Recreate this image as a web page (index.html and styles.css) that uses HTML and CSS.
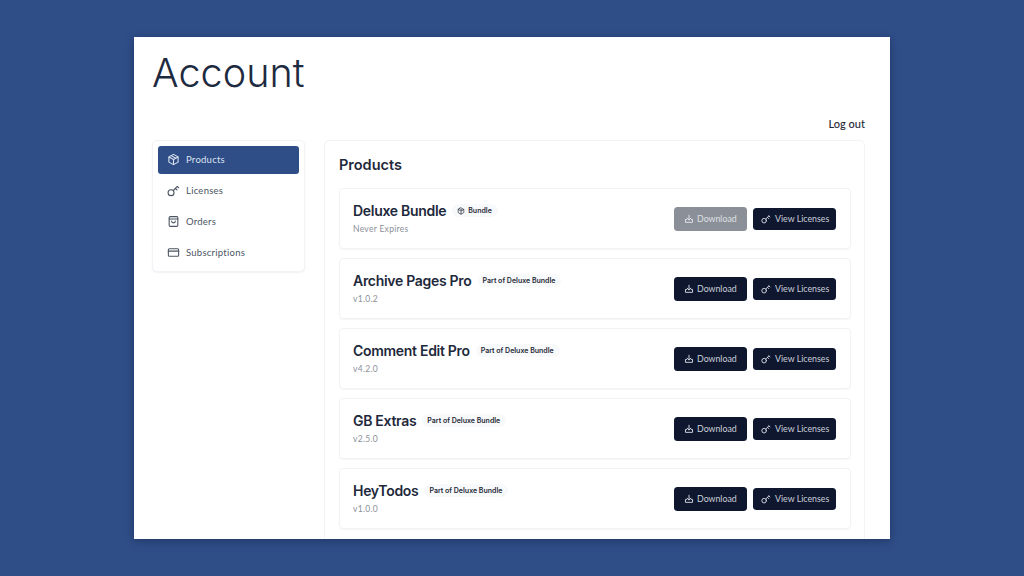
FILE: index.html
```html
<!DOCTYPE html>
<html lang="en">
<head>
<meta charset="utf-8">
<title>Account</title>
<link rel="stylesheet" href="styles.css">
</head>
<body>
<svg class="defs" width="0" height="0" aria-hidden="true">
  <defs>
    <symbol id="i-box" viewBox="0 0 24 24"><path d="M12 2.500l8.500 4.700v9.600L12 21.500l-8.500-4.700V7.200z"/><path d="M3.800 7.300L12 12l8.200-4.700M12 12v9.300M7.800 4.900l8.400 4.800"/></symbol>
    <symbol id="i-key" viewBox="0 0 24 24"><circle cx="7.500" cy="16" r="5.500"/><path d="M11.500 12L19 4.500M15.500 8l3 3M19 4.500l2.500 2.500"/></symbol>
    <symbol id="i-bag" viewBox="0 0 24 24"><rect x="4" y="3" width="16" height="18" rx="2"/><path d="M4 7.500h16M8.500 11c0 2 1.500 3.500 3.500 3.500s3.500-1.500 3.500-3.500"/></symbol>
    <symbol id="i-card" viewBox="0 0 24 24"><rect x="2.500" y="5" width="19" height="14" rx="2"/><path d="M2.500 9.500h19"/></symbol>
    <symbol id="i-dl" viewBox="0 0 24 24"><path d="M12 3v11M7.500 10l4.500 4.500 4.500-4.500M6.500 13H3.500v7h17v-7h-3"/></symbol>
  </defs>
</svg>
<div class="window">
  <h1 class="title">Account</h1>
  <div class="logout-row"><a class="logout">Log out</a></div>
  <div class="columns">
    <nav class="nav">
      <a class="nav-item active"><svg class="nav-icon"><use href="#i-box"/></svg>Products</a>
      <a class="nav-item"><svg class="nav-icon"><use href="#i-key"/></svg>Licenses</a>
      <a class="nav-item"><svg class="nav-icon"><use href="#i-bag"/></svg>Orders</a>
      <a class="nav-item"><svg class="nav-icon"><use href="#i-card"/></svg>Subscriptions</a>
    </nav>
    <main class="panel">
      <h2 class="panel-title">Products</h2>
      <div class="row">
        <div class="info">
          <div class="name-line"><span class="name">Deluxe Bundle</span><span class="badge"><svg class="badge-icon"><use href="#i-box"/></svg>Bundle</span></div>
          <div class="meta">Never Expires</div>
        </div>
        <a class="btn btn-dl disabled"><svg class="btn-icon"><use href="#i-dl"/></svg>Download</a>
        <a class="btn btn-lic"><svg class="btn-icon"><use href="#i-key"/></svg>View Licenses</a>
      </div>
      <div class="row">
        <div class="info">
          <div class="name-line"><span class="name">Archive Pages Pro</span><span class="badge">Part of Deluxe Bundle</span></div>
          <div class="meta">v1.0.2</div>
        </div>
        <a class="btn btn-dl"><svg class="btn-icon"><use href="#i-dl"/></svg>Download</a>
        <a class="btn btn-lic"><svg class="btn-icon"><use href="#i-key"/></svg>View Licenses</a>
      </div>
      <div class="row">
        <div class="info">
          <div class="name-line"><span class="name">Comment Edit Pro</span><span class="badge">Part of Deluxe Bundle</span></div>
          <div class="meta">v4.2.0</div>
        </div>
        <a class="btn btn-dl"><svg class="btn-icon"><use href="#i-dl"/></svg>Download</a>
        <a class="btn btn-lic"><svg class="btn-icon"><use href="#i-key"/></svg>View Licenses</a>
      </div>
      <div class="row">
        <div class="info">
          <div class="name-line"><span class="name">GB Extras</span><span class="badge">Part of Deluxe Bundle</span></div>
          <div class="meta">v2.5.0</div>
        </div>
        <a class="btn btn-dl"><svg class="btn-icon"><use href="#i-dl"/></svg>Download</a>
        <a class="btn btn-lic"><svg class="btn-icon"><use href="#i-key"/></svg>View Licenses</a>
      </div>
      <div class="row">
        <div class="info">
          <div class="name-line"><span class="name">HeyTodos</span><span class="badge">Part of Deluxe Bundle</span></div>
          <div class="meta">v1.0.0</div>
        </div>
        <a class="btn btn-dl"><svg class="btn-icon"><use href="#i-dl"/></svg>Download</a>
        <a class="btn btn-lic"><svg class="btn-icon"><use href="#i-key"/></svg>View Licenses</a>
      </div>
    </main>
  </div>
</div>
</body>
</html>
```
FILE: styles.css
```css
* { box-sizing: border-box; }
html, body { height: 100%; }
body {
  margin: 0;
  padding: 37px 134px;
  background: #2f4d87;
  font-family: "Lato", "Liberation Sans", sans-serif;
  color: #0f172a;
  overflow: hidden;
}
.defs { display: block; height: 0; }
svg { fill: none; stroke: currentColor; stroke-width: 2; stroke-linecap: round; stroke-linejoin: round; flex: none; }

.window {
  width: 756px;
  height: 502px;
  background: #fff;
  padding: 11px 25px 0 18px;
  overflow: hidden;
  box-shadow: 0 2px 8px rgba(10, 20, 50, .35);
}
.title {
  margin: 0;
  height: 50px;
  font-family: "Inter", "Liberation Sans", sans-serif;
  font-size: 39.500px;
  line-height: 50px;
  font-weight: 350;
  letter-spacing: .05px;
  color: #1e2a3f;
}
.logout-row { display: flex; justify-content: flex-end; margin-top: 9px; height: 23px; }
.logout { font-size: 11px; line-height: 14px; margin-top: 10px; font-weight: 500; color: #1f2937; }
.columns { display: flex; align-items: flex-start; gap: 19px; margin-top: 10px; }

.nav {
  width: 153px;
  flex: none;
  padding: 5px 5px 4px;
  display: flex;
  flex-direction: column;
  gap: 3px;
  background: #fff;
  border: 1px solid #f1f3f6;
  border-radius: 5px;
  box-shadow: 0 1px 2px rgba(15, 23, 42, .06);
}
.nav-item {
  display: flex;
  align-items: center;
  gap: 6px;
  height: 28px;
  padding: 0 0 1px 9px;
  border-radius: 3px;
  font-size: 9.500px;
  letter-spacing: .25px;
  color: #4b5563;
}
.nav-item.active { background: #2f4d87; color: #dde4f0; }
.nav-icon { width: 13px; height: 13px; }

.panel {
  width: 541px;
  flex: none;
  padding: 14px 13px 30px 14px;
  background: #fff;
  border: 1px solid #f1f3f6;
  border-radius: 5px;
  display: flex;
  flex-direction: column;
  gap: 9px;
}
.panel-title {
  margin: 0 0 5px;
  height: 19px;
  font-family: "Inter", "Liberation Sans", sans-serif;
  font-size: 14.500px;
  line-height: 19px;
  font-weight: 600;
  color: #1e293b;
}
.row {
  height: 61px;
  flex: none;
  display: flex;
  align-items: center;
  padding: 0 14px 0 13px;
  border: 1px solid #f0f2f5;
  border-radius: 4px;
  box-shadow: 0 1px 1px rgba(15, 23, 42, .04);
}
.info { flex: 1; min-width: 0; }
.name-line { display: flex; align-items: center; gap: 6px; height: 17px; }
.name {
  font-family: "Inter", "Liberation Sans", sans-serif;
  font-size: 14px;
  font-weight: 600;
  letter-spacing: -.3px;
  color: #1e293b;
  margin-bottom: 1px;
}
.badge {
  display: flex;
  align-items: center;
  gap: 3px;
  height: 13px;
  padding: 0 6px 0 5px;
  border-radius: 7px;
  background: #f8f9fb;
  font-family: "Inter", "Liberation Sans", sans-serif;
  font-size: 7px;
  font-weight: 600;
  color: #1f2937;
}
.badge-icon { width: 8px; height: 8px; }
.meta { margin-top: 5px; font-size: 8.500px; line-height: 11px; letter-spacing: .3px; color: #8a8f98; }

.btn {
  display: flex;
  align-items: center;
  flex: none;
  border-radius: 3.500px;
  background: #0f172f;
  color: #cbd0da;
  font-size: 8.800px;
  white-space: nowrap;
}
.btn-dl { width: 73px; height: 24px; padding-left: 10px; gap: 3px; }
.btn-lic { width: 83px; height: 22px; padding-left: 8px; gap: 4px; margin-left: 6px; }
.btn.disabled { background: #8b8f98; color: #dfe1e5; }
.btn-icon { width: 10px; height: 10px; stroke-width: 2.400; }
```
